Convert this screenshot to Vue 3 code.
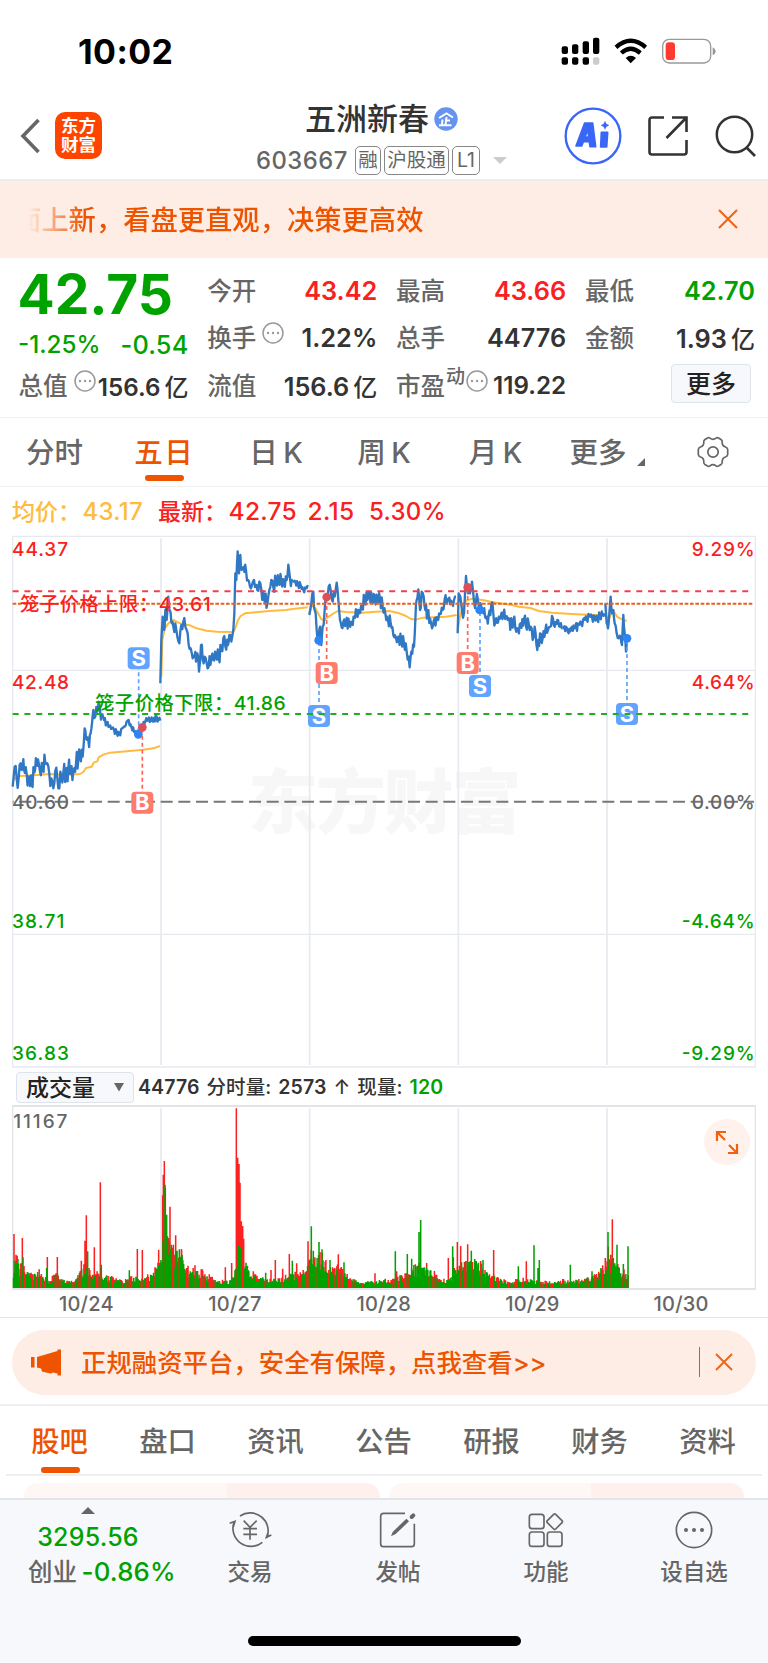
<script setup>
const quotes = [
  [{ l: '今开', v: '43.42', c: 'red' }, { l: '换手', v: '1.22%', dots: true }, { l: '流值', v: '156.6', u: '亿' }],
  [{ l: '最高', v: '43.66', c: 'red' }, { l: '总手', v: '44776' }, { l: '市盈', sup: '动', dots: true, v: '119.22', small: true }],
  [{ l: '最低', v: '42.70', c: 'green' }, { l: '金额', v: '1.93', u: '亿' }, { more: true }],
]
const infoTabs = ['股吧', '盘口', '资讯', '公告', '研报', '财务', '资料']

// Deterministic pseudo-random numbers for the intraday noise
function rng(seed) {
  let s = seed
  return () => {
    s = (s * 16807) % 2147483647
    return s / 2147483647
  }
}

// Chart units are thirds of a pixel
const price = [
  { dx: 0, amp: 32, p: '38,770 44,710 50,745 56,745 62,700 68,705 72,720 80,732 88,748 95,745 103,728 110,698 114,688 120,725 128,700 136,698 142,700 148,732 154,745 160,775 166,722 172,745 178,775 184,738 190,728 198,738 205,715 212,732 220,722 228,702 235,690 240,680 248,680 254,595 258,625 265,630 272,610 276,580 280,540 286,560 292,545 296,515 300,540 306,550' },
  { dx: 0, amp: 11, p: '306,550 312,570 320,580 328,590 336,595 342,600 350,605 358,612 366,595 374,590 380,575 386,570 394,590 402,605 410,605 420,600 428,590 436,575 444,570 452,572 460,575 470,560 475,570 481,572' },
  { dx: 0, amp: 24, p: '481,460 484,330 488,260 492,300 496,240 500,270 505,200 508,240 512,250 516,280 520,290 526,280 532,320 538,340 544,285 550,275 556,290 560,300 566,345 572,355 578,385 584,375 588,395 592,370 597,425 603,345 608,390 614,380 620,400 626,410 634,385 640,390 648,375 656,385 664,360 670,325 676,350 684,345 688,315 694,335 700,300 703,250 706,130 709,150 713,64 717,130 721,75 725,120 731,110 738,120 744,150 750,170 756,165 762,150 768,165 772,180 778,155 784,180 792,200 802,222 808,180 814,150 820,172 828,155 836,160 844,150 852,160 860,150 865,104 870,145 878,155' },
  { dx: 0, amp: 10, p: '878,155 886,155 894,165 902,165 910,180 918,175 923,165' },
  { dx: 768, amp: 22, p: '160,255 166,220 172,185 176,240 182,300 188,330 192,290 196,345 200,290 206,240 212,200 218,170 224,180 230,215 236,200 242,158 247,210 252,270 257,292 262,275 270,275 280,285 288,280 295,260 302,240 310,250 318,230 326,210 334,210 341,188 348,215 356,200 364,215 372,205 380,230 388,250 396,270 404,280 412,315 420,325 428,320 436,330 444,340 452,365 458,380 461,412 466,365 474,350 478,270 482,210 487,178 492,240 497,185 503,200 508,240 515,250 522,265 528,295 536,265 544,270 552,255' },
  { dx: 768, amp: 15, p: '552,255 560,240 566,208 574,215 580,203 588,220 594,210 600,200' },
  { dx: 768, amp: 23, p: '605,310 608,190 613,200 618,240 624,250 630,138 636,190 642,190 648,155 654,215 660,215 665,205 670,235 676,230 682,250 690,265 698,255 706,222 712,250 718,278 726,278 734,260 742,250 750,260 758,265 768,290 772,270 778,295 786,300 794,280 804,268 810,290 818,280 824,290 830,330 836,290 844,360 852,310 860,325 868,300 876,300 882,290 888,258 896,290 904,270 912,290 920,295' },
  { dx: 1536, amp: 15, p: '152,295 162,290 170,310 180,290 190,290 200,285 208,280 216,265 224,270 232,255 240,262 248,262 256,262 264,262 272,255 278,250' },
  { dx: 1536, amp: 8, p: '280,220 284,280 288,295 292,250 296,200 300,250 304,240 308,280 314,310 320,325 326,320 330,345 334,255 338,310 342,365 345,330' },
]
const avg = [
  '38,750 60,738 100,736 150,732 200,734 240,732 250,726 258,714 275,710 282,697 292,694 296,682 310,674 330,668 380,664 430,659 460,655 480,648',
  '484,440 487,330 495,295 505,280 520,270 535,278 550,283 570,286 590,295 620,302 650,305 700,306 706,295 713,272 722,258 735,250 768,247 808,243 858,240 878,237 923,232',
  '928,250 936,225 946,235 954,250 964,268 974,270 983,262 998,252 1013,243 1038,246 1088,248 1128,245 1168,243 1198,250 1218,258 1233,267 1248,269 1268,263 1298,262 1338,260 1370,255',
  '1373,300 1380,260 1388,230 1398,212 1418,206 1448,210 1478,217 1536,225 1556,230 1591,234 1616,243 1656,248 1716,252 1776,255 1814,255',
  '1817,255 1822,262 1826,268 1834,250 1842,245 1851,260 1866,268 1880,273',
]
const pts = (s) => s.split(' ').map((q) => q.split(',').map(Number))

const priceLines = price.map((seg, k) => {
  const r = rng(917 + k * 131)
  const a = pts(seg.p)
  const out = []
  let sign = 1
  for (let i = 0; i < a.length - 1; i++) {
    const [x0, y0] = a[i]
    const [x1, y1] = a[i + 1]
    const n = Math.max(1, Math.round((x1 - x0) / 2.5))
    for (let j = 0; j < n; j++) {
      const t = j / n
      const jit = j === 0 ? 0 : sign * r() * seg.amp
      if (j > 0) sign = -sign
      out.push(`${(seg.dx + x0 + (x1 - x0) * t).toFixed(1)},${(y0 + (y1 - y0) * t + jit).toFixed(1)}`)
    }
  }
  const last = a[a.length - 1]
  out.push(`${seg.dx + last[0]},${last[1]}`)
  return out.join(' ')
})

// Volume: typical height envelope, filled with noise, and single spikes on top
const env = pts('38,60 50,100 65,60 90,45 120,50 150,25 165,50 185,28 220,22 240,60 262,75 275,40 290,62 310,42 335,35 370,20 400,38 430,28 455,45 475,85 486,110 492,290 497,280 502,200 508,130 515,120 540,112 550,98 560,60 590,60 620,45 650,20 690,25 706,60 712,130 720,120 730,90 745,60 770,40 800,28 840,30 870,45 905,45 925,70 934,112 960,120 970,90 1000,70 1035,55 1050,32 1080,18 1140,25 1180,28 1200,40 1230,50 1245,80 1260,60 1275,70 1290,60 1320,30 1350,25 1365,80 1385,95 1405,80 1430,95 1450,60 1475,40 1500,30 1530,20 1560,28 1580,30 1610,22 1650,20 1690,24 1720,24 1760,35 1790,38 1810,80 1830,100 1845,80 1860,60 1886,35')
const redSpikes = pts('42,162 48,100 67,150 72,66 142,93 172,93 255,142 259,218 283,122 301,317 244,82 412,117 427,114 476,115 488,278 490,340 493,381 496,300 505,150 510,244 527,158 545,112 585,68 607,56 676,62 695,75 709,539 713,391 717,372 720,316 724,200 728,186 731,148 760,50 813,54 826,84 848,58 868,102 890,74 924,140 1015,101 1125,44 1481,114 1579,80 1190,50 1257,75 1280,75 1345,90 1372,138 1382,126 1403,131 1360,92 1928,43 1808,68 1817,82 1825,124 1832,100 1837,206 1872,56')
const greenSpikes = pts('69,92 140,60 263,110 304,70 388,53 495,310 500,220 514,130 538,116 716,128 722,122 738,76 797,46 877,82 934,185 940,112 957,138 966,116 990,84 1032,77 1186,110 1222,102 1235,88 1257,168 1262,204 1358,125 1397,80 1414,112 1449,84 1602,128 1618,84 1614,60 1555,65 1711,70 1776,50 1824,168 1851,130 1840,90 1870,72 1884,125')
const h = (x) => {
  for (let i = 1; i < env.length; i++) {
    if (x <= env[i][0]) {
      const [x0, y0] = env[i - 1]
      const [x1, y1] = env[i]
      return y0 + ((y1 - y0) * (x - x0)) / (x1 - x0)
    }
  }
  return env[env.length - 1][1]
}
const bar = (x, v) => `M${x} 684V${(684 - v).toFixed(0)}`
let redBars = ''
let greenBars = ''
const vr = rng(4242)
for (let x = 40.5; x < 1886; x += 2.2) {
  const v = h(x) * (0.5 + 0.62 * vr())
  if (vr() < 0.55) redBars += bar(x.toFixed(1), v)
  else greenBars += bar(x.toFixed(1), v * 0.88)
}
for (const [x, v] of redSpikes) if (x < 1900) redBars += bar(x, v)
for (const [x, v] of greenSpikes) greenBars += bar(x, v)

const trades = [
  { t: 'S', x: 416, y: 385, dx: 415, dy: 613 },
  { t: 'B', x: 427, y: 818, dx: 427, dy: 592 },
  { t: 'S', x: 957, y: 558, dx: 956, dy: 331 },
  { t: 'B', x: 980, y: 429, dx: 980, dy: 201 },
  { t: 'B', x: 1403, y: 399, dx: 1403, dy: 172 },
  { t: 'S', x: 1440, y: 468, dx: 1439, dy: 240 },
  { t: 'S', x: 1881, y: 552, dx: 1881, dy: 325 },
]
const axis = [
  { y: 76, l: '44.37', r: '9.29%', c: 'r', w: 168, rw: 189 },
  { y: 474, l: '42.48', r: '4.64%', c: 'r', w: 171, rw: 189 },
  { y: 834, l: '40.60', r: '0.00%', c: 'k', w: 171, rw: 189 },
  { y: 1193, l: '38.71', r: '-4.64%', c: 'g', w: 157, rw: 219 },
  { y: 1589, l: '36.83', r: '-9.29%', c: 'g', w: 171, rw: 219 },
]
</script>

<template>
  <div class="screen">
    <header class="status">
      <span class="clock">10:02</span>
      <svg class="signal" width="156" height="30" viewBox="0 0 468 90">
        <g fill="#000">
          <rect x="2" y="28" width="19" height="23" rx="6" /><rect x="33" y="22" width="19" height="29" rx="6" />
          <rect x="65" y="13" width="19" height="38" rx="6" /><rect x="96" y="2" width="19" height="49" rx="6" />
          <rect x="2" y="61" width="19" height="22" rx="6" /><rect x="33" y="61" width="19" height="22" rx="6" />
          <rect x="65" y="61" width="19" height="22" rx="6" />
        </g>
        <rect x="96" y="61" width="19" height="22" rx="6" fill="#ccc" />
        <g fill="none" stroke="#000" stroke-width="13">
          <path d="M165 31Q209 -8 254 31" /><path d="M181 48Q209 23 238 48" />
        </g>
        <path d="M194 63Q209 50 225 63L209 79Z" />
        <rect x="305" y="7" width="144" height="71" rx="20" fill="none" stroke="#999" stroke-width="4" />
        <rect x="314" y="16" width="28" height="53" rx="10" fill="#ff3b30" />
        <path d="M455 31Q464 35 464 43T455 55Z" fill="#999" />
      </svg>
    </header>

    <nav class="nav">
      <div class="left">
        <svg width="20" height="36" viewBox="0 0 20 36"><path d="M18.500 2L3 18L18.500 34" fill="none" stroke="#666" stroke-width="3.600" /></svg>
        <div class="logo"><span>东方</span><span>财富</span></div>
      </div>
      <div class="title">
        <div class="name">五洲新春
          <svg width="24" height="24" viewBox="0 0 24 24"><circle cx="12" cy="12" r="11.7" fill="#6593ee" /><path d="M5 11L12.500 6.500L19 10.500M12.500 10L11.500 18M8.500 12.500L8 18M12.500 13.500H16M5 18.300H17.500" fill="none" stroke="#fff" stroke-width="2" /></svg>
        </div>
        <div class="code"><b>603667</b><i>融</i><i class="hgt">沪股通</i><i class="l1">L1</i><em></em></div>
      </div>
      <div class="tools">
        <svg width="58" height="58" viewBox="0 0 174 174">
          <circle cx="87" cy="87" r="82" fill="none" stroke="#3a66f8" stroke-width="7" />
          <g fill="#3a66f8" stroke="#3a66f8" stroke-width="5" stroke-linejoin="round">
            <path fill-rule="evenodd" d="M36 117L62 48H86L95 119H78L76 104H58L53 117ZM63 90H74L72 67Z" />
            <path d="M112 76H131L128 120H110Z" /><path d="M123 43L127 51L135 55L127 59L123 67L119 59L111 55L119 51Z" stroke-width="1" />
          </g>
        </svg>
        <svg width="40" height="40" viewBox="0 0 40 40"><path d="M16 1.5H4Q1.5 1.5 1.5 4V36Q1.5 38.5 4 38.5H36Q38.5 38.5 38.5 36V24M24 1.5H38.5V16M38 2L18.500 22" fill="none" stroke="#333" stroke-width="2.600" /></svg>
        <svg class="mag" width="42" height="42" viewBox="0 0 42 42"><circle cx="19.500" cy="19.500" r="17.700" fill="none" stroke="#333" stroke-width="2.500" /><path d="M31 32L40 41" stroke="#333" stroke-width="2.600" /></svg>
      </div>
    </nav>

    <section class="notice">
      <p>面上新，看盘更直观，决策更高效</p>
      <svg width="20" height="20" viewBox="0 0 20 20"><path d="M1 1L19 19M19 1L1 19" stroke="#ee6414" stroke-width="2" /></svg>
    </section>

    <section class="quote">
      <div class="col main">
        <div class="last">42.75</div>
        <div class="chg"><span>-1.25%</span><span class="amt">-0.54</span></div>
        <div class="row">
          <label>总值</label>
          <svg class="more-dots" width="22" height="22" viewBox="0 0 22 22"><circle cx="11" cy="11" r="10" fill="none" stroke="#999" stroke-width="1.500" /><g fill="#999"><circle cx="6" cy="11" r="1.200" /><circle cx="11" cy="11" r="1.200" /><circle cx="16" cy="11" r="1.200" /></g></svg>
          <b class="sm">156.6<u>亿</u></b>
        </div>
      </div>
      <div v-for="(col, i) in quotes" :key="i" class="col">
        <template v-for="(q, j) in col" :key="j">
          <div v-if="q.more" class="row"><button class="more">更多</button></div>
          <div v-else class="row">
            <label>{{ q.l }}</label>
            <sup v-if="q.sup">{{ q.sup }}</sup>
            <svg v-if="q.dots" class="more-dots" :class="{ tight: q.sup }" width="22" height="22" viewBox="0 0 22 22"><circle cx="11" cy="11" r="10" fill="none" stroke="#999" stroke-width="1.500" /><g fill="#999"><circle cx="6" cy="11" r="1.200" /><circle cx="11" cy="11" r="1.200" /><circle cx="16" cy="11" r="1.200" /></g></svg>
            <b :class="[q.c, { sm: q.small }]">{{ q.v }}<u v-if="q.u">{{ q.u }}</u></b>
          </div>
        </template>
      </div>
    </section>

    <section class="ktabs">
      <span>分时</span><span class="on">五日</span><span class="k">日 K</span><span class="k">周 K</span><span class="k">月 K</span><span class="dd">更多</span>
      <span class="gear"><svg width="32" height="32" viewBox="0 0 32 32" fill="none" stroke="#666" stroke-width="1.700"><path d="M10.500 2Q12 1.300 13 2.200Q16 4.500 19 2.200Q20 1.300 21.500 2L24 3.500Q25.500 4.500 25.200 6Q25 10 28.500 11Q30.500 11.800 30.700 13.500V18.500Q30.500 20.200 28.500 21Q25 22 25.200 26Q25.500 27.500 24 28.500L21.500 30Q20 30.700 19 29.800Q16 27.500 13 29.800Q12 30.700 10.500 30L8 28.500Q6.500 27.500 6.800 26Q7 22 3.500 21Q1.500 20.200 1.300 18.500V13.500Q1.500 11.800 3.500 11Q7 10 6.800 6Q6.500 4.500 8 3.500Z" /><circle cx="16" cy="16" r="5.200" /></svg></span>
    </section>

    <section class="legend">
      <span class="y t0">均价：</span><span class="y n1">43.17</span><span class="r t0">最新：</span><span class="r n2">42.75</span><span class="r n3">2.15</span><span class="r n4">5.30%</span>
    </section>

    <svg class="chart" width="768" height="540" viewBox="0 0 2304 1620">
      <text x="744" y="894" class="wm" textLength="820">东方财富</text>
      <g fill="none" stroke="#e6e9f0" stroke-width="5">
        <path d="M38 19V1610M2266 19V1610M37 19H2267M37 1611H2267M37 421H2267M37 1213H2267" stroke-width="4" />
        <path d="M483 25V1605M929 25V1605M1375 25V1605M1821 25V1605" />
      </g>
      <path d="M38 815H2262" stroke="#777" stroke-width="6" stroke-dasharray="36 17" stroke-dashoffset="33" />
      <g fill="none" stroke="#ffbb3b" stroke-width="6" stroke-linejoin="round"><polyline v-for="a in avg" :key="a" :points="a" /></g>
      <g fill="none" stroke="#3077c4" stroke-width="7" stroke-linejoin="round"><polyline v-for="(l, i) in priceLines" :key="i" :points="l" /></g>
      <path d="M38 184H2254" stroke="#f2404a" stroke-width="6" stroke-dasharray="18 17.300" />
      <path d="M38 221H2262" stroke="#e8621c" stroke-width="6" stroke-dasharray="11 5" />
      <g v-for="(t, i) in trades" :key="i">
        <line :x1="t.x" :x2="t.x" :y1="t.y" :y2="t.dy" :stroke="t.t === 'S' ? '#5ea1fb' : '#fb6455'" stroke-width="5" stroke-dasharray="12 9" />
        <circle :cx="t.dx" :cy="t.dy" r="13" :fill="t.t === 'S' ? '#2f84f5' : '#d9505a'" />
        <rect :x="t.x - 33" :y="t.y - 33" width="66" height="66" rx="12" :fill="t.t === 'S' ? '#62a3ff' : '#ff7b6d'" />
        <text :x="t.x" :y="t.y + 23" class="mark">{{ t.t }}</text>
      </g>
      <path d="M38 552H2254" stroke="#22ac22" stroke-width="6" stroke-dasharray="18 17.300" />
      <text x="60" y="243" class="lim r" textLength="572">笼子价格上限：43.61</text>
      <text x="285" y="540" class="lim g" textLength="572">笼子价格下限：41.86</text>
      <g v-for="a in axis" :key="a.y" class="ax">
        <text x="36" :y="a.y + 2" :class="a.c" :textLength="a.w">{{ a.l }}</text>
        <text :x="2264 - a.rw" :y="a.y + 2" :class="a.c" :textLength="a.rw">{{ a.r }}</text>
      </g>
    </svg>

    <section class="volhead">
      <div class="picker">成交量<svg width="10" height="9" viewBox="0 0 10 9"><path d="M0 0H10L5 8.500Z" fill="#666" /></svg></div>
      <p><span class="num">44776</span><span>分时量:</span><span class="num">2573</span><span>↑</span><span>现量:</span><span class="green">120</span></p>
    </section>

    <div class="volume">
      <svg width="768" height="185" viewBox="0 135 2304 555">
        <g fill="none" stroke="#e2e4ea"><path d="M38 137V688M2266 137V688" stroke-width="4" /><path d="M483 145V686M929 145V686M1375 145V686M1821 145V686" stroke="#e6e9f0" stroke-width="5" /><path d="M37 138H2268M37 687H2268" stroke-width="6" /></g>
        <path :d="redBars" stroke="#fc2020" stroke-width="4.600" />
        <path :d="greenBars" stroke="#00a200" stroke-width="4.600" />
        <text x="40" y="203" class="vmax" textLength="162">11167</text>
      </svg>
      <button class="expand"><svg width="24" height="24" viewBox="0 0 24 24" fill="none" stroke="#f0610f" stroke-width="2.200"><path d="M2 11V2H11M2 2L10 10M22 14V23H13M22 23L14 15" /></svg></button>
    </div>
    <div class="dates"><span>10/24</span><span>10/27</span><span>10/28</span><span>10/29</span><span>10/30</span></div>

    <section class="promo">
      <div class="pill">
        <svg width="31" height="27" viewBox="0 0 31 27" fill="#ee5400"><path d="M0 8H3.500V18.500H0ZM6 8L26.500 2V0.500H30V26.500H26.500V24.500L22 23.500Q20 25 17 24L11 22.500L10 19.500L6 18.500Z" /></svg>
        <p>正规融资平台，安全有保障，点我查看&gt;&gt;</p>
        <i></i>
        <svg class="x" width="18" height="18" viewBox="0 0 18 18"><path d="M1 1L17 17M17 1L1 17" stroke="#ee6414" stroke-width="1.900" /></svg>
      </div>
    </section>

    <section class="itabs"><span v-for="(t, i) in infoTabs" :key="t" :class="{ on: i === 0 }">{{ t }}</span></section>
    <section class="cards"><div></div><div></div></section>

    <footer class="bar">
      <div class="index">
        <em></em>
        <b>3295.56</b>
        <p>创业<b>-0.86%</b></p>
      </div>
      <div class="act">
        <svg width="44" height="40" viewBox="0 0 132 120" fill="none" stroke="#666" stroke-width="5"><path d="M36 21A54 54 0 0 1 116 87M103 100A54 54 0 0 1 18 40M5 43L21 37L16 53M130 78L115 85L121 68" /><path d="M47 35L66 55L86 35M66 55V92M46 59H87M46 76H87" /></svg>
        <span>交易</span>
      </div>
      <div class="act">
        <svg width="38" height="40" viewBox="0 0 114 120" fill="none" stroke="#666" stroke-width="5"><path d="M78 13H14Q5 13 5 22V104Q5 113 14 113H97Q106 113 106 104V44" /><path d="M98 24L103 19" stroke-width="12" stroke-linecap="round" /><path d="M36 82L41 69L82 29L90 37L50 75Z" fill="#666" stroke="none" /></svg>
        <span>发帖</span>
      </div>
      <div class="act">
        <svg width="36" height="40" viewBox="0 0 108 120" fill="none" stroke="#666" stroke-width="5"><rect x="4" y="16" width="44" height="43" rx="8" /><rect x="4" y="69" width="44" height="43" rx="8" /><rect x="58" y="69" width="44" height="43" rx="8" /><path d="M77 16Q80 13 83 16L102 35Q105 38 102 41L83 60Q80 63 77 60L58 41Q55 38 58 35Z" /></svg>
        <span>功能</span>
      </div>
      <div class="act">
        <svg width="38" height="40" viewBox="0 0 114 120"><circle cx="57" cy="63" r="53" fill="none" stroke="#666" stroke-width="5" /><g fill="#666"><circle cx="33" cy="63" r="6" /><circle cx="57" cy="63" r="6" /><circle cx="81" cy="63" r="6" /></g></svg>
        <span>设自选</span>
      </div>
      <div class="home"></div>
    </footer>
  </div>
</template>

<style>
body { margin: 0; background: #fff; }
</style>

<style scoped>
.screen { width: 768px; height: 1663px; overflow: hidden; display: flex; flex-direction: column; background: #fff; color: #333; font-family: Inter, "Noto Sans CJK SC", sans-serif; font-weight: 500; }
.screen > * { flex: none; box-sizing: border-box; }
p { margin: 0; }
svg { display: block; flex: none; }
b { font-weight: 600; }
i, em { font-style: normal; }
u { text-decoration: none; }
.red { color: #fa2020; }
.green { color: #00a200; }

.status { height: 92px; display: flex; align-items: flex-start; justify-content: space-between; padding: 32px 51px 0 78px; }
.clock { font-size: 34px; line-height: 40px; font-weight: 700; color: #000; letter-spacing: .4px; }
.signal { margin-top: 5px; }

.nav { height: 89px; border-bottom: 2px solid #e9ecf0; display: grid; grid-template-columns: 256px 260px 1fr; }
.left { display: flex; align-items: center; padding-left: 20px; }
.logo { margin-left: 15px; width: 47px; height: 47px; border-radius: 10px; background: #ff4400; color: #fff; font-size: 17.5px; line-height: 19px; font-weight: 700; display: flex; flex-direction: column; align-items: center; justify-content: center; }
.logo span { position: relative; top: -1px; }
.title { padding-top: 3px; }
.name { display: flex; align-items: center; gap: 5px; padding-left: 49px; height: 42px; font-size: 31px; }
.name svg { margin-top: 6px; }
.code { display: flex; align-items: center; height: 29px; margin-top: 9px; color: #666; }
.code b { font-size: 23.8px; font-weight: 500; letter-spacing: .5px; width: 99px; }
.code i { box-sizing: border-box; height: 29px; border: 1.5px solid #888; border-radius: 5px; font-size: 19.5px; line-height: 27px; width: 26px; text-align: center; font-weight: 400; margin-right: 3px; }
.code .hgt { width: 65px; }
.code .l1 { width: 28px; }
.code em { border: 7px solid transparent; border-top-color: #ccc; border-bottom: 0; margin-left: 10px; }
.tools { display: flex; align-items: center; padding-left: 48px; }
.tools svg + svg { margin-left: 26px; }
.tools .mag { margin-left: 27px; }

.notice { height: 77px; background: #feede5; display: flex; align-items: center; justify-content: space-between; padding: 0 30px 0 14px; color: #ee5400; font-size: 27.3px; }
.notice p { margin-top: -4px; -webkit-mask-image: linear-gradient(90deg, transparent 14px, #000 70px); mask-image: linear-gradient(90deg, transparent 14px, #000 70px); }
.notice svg { margin-top: -1px; }

.quote { height: 160px; border-bottom: 1px solid #f0f1f3; padding: 9px 13px 0 19px; display: grid; grid-template-columns: repeat(4, 169.500px); column-gap: 19.300px; }
.row { display: flex; align-items: center; height: 47.500px; position: relative; }
.row label { font-size: 24.500px; color: #666; margin: -3px 0 0 -.5px; }
.row b { margin: -1px 0 0 auto; font-size: 25.300px; white-space: nowrap; }
.row b.sm { font-size: 24.200px; padding-top: 1px; }
.row u { font-size: 24px; font-weight: 500; margin-left: 4px; }
.more-dots { margin: -10px 0 0 6px; }
.more-dots.tight { margin-left: 1px; }
sup { font-size: 19px; line-height: 20px; color: #666; margin: -18px 0 0 1px; vertical-align: baseline; }
.last { font-size: 55px; line-height: 54px; height: 54px; font-weight: 700; color: #00a200; margin-left: -1.500px; }
.chg { height: 41px; display: flex; justify-content: space-between; font-size: 24.200px; line-height: 47px; font-weight: 500; color: #00a200; margin-left: -1px; }
.chg .amt { font-size: 25.300px; letter-spacing: .2px; }
.more { margin: -4px 4px 0 auto; width: 80px; height: 39px; border: 1.500px solid #dfe3ea; border-radius: 4px; background: #f7f8fb; padding: 0; font: inherit; font-size: 25px; line-height: 34px; color: #222; }

.ktabs { height: 69px; border-bottom: 1px solid #f0f1f3; display: grid; grid-template-columns: 109px 109px 116px 100px 123px 82px 1fr; color: #666; font-size: 28.500px; line-height: 69px; text-align: center; }
.ktabs span { position: relative; }
.on { color: #ee5400; }
.ktabs .on { letter-spacing: 1.500px; padding-left: 1.500px; }
.ktabs .k { word-spacing: -2px; }
.ktabs .on::after, .itabs .on::after { content: ""; position: absolute; left: 50%; bottom: 6px; width: 39px; height: 6px; margin-left: -19px; border-radius: 3px; background: #ee5400; }
.dd::after { content: ""; position: absolute; left: 80px; top: 40px; border-left: 8px solid transparent; border-bottom: 8px solid #666; }
.gear { padding: 18px 0 0 58px; }

.legend { height: 43px; padding: 5px 0 0 12px; display: flex; align-items: center; font-size: 23px; }
.legend span { white-space: nowrap; }
.legend .y { color: #ffbb3b; }
.legend .r { color: #fa2020; }
.legend .t0 { width: 70.500px; margin-top: -2px; }
.n1, .n2, .n3, .n4 { font-size: 24px; letter-spacing: .3px; }
.n1 { width: 75.500px; }
.n2 { width: 79px; font-weight: 500; font-size: 24.500px; }
.n3 { width: 61.500px; font-weight: 500; font-size: 24.500px; }
.n4 { font-weight: 500; }

.chart text { font-family: Inter, "Noto Sans CJK SC", sans-serif; }
.chart .wm { font-size: 210px; font-weight: 800; fill: #f7f7f7; }
.chart .mark { font-size: 66px; font-weight: 700; fill: #fff; text-anchor: middle; }
.chart .lim { font-size: 58px; font-weight: 500; }
.ax text { font-size: 57px; font-weight: 500; }
.chart .r { fill: #fa2020; }
.chart .g { fill: #00a200; }
.chart .k { fill: #666; }

.volhead { height: 35px; display: flex; align-items: flex-start; padding: 1px 0 0 16px; }
.picker { box-sizing: border-box; width: 118px; height: 31px; margin-top: 1px; border: 1.500px solid #dfe3ea; border-radius: 4px; background: #f7f8fb; display: flex; align-items: center; justify-content: space-between; padding: 0 9px; font-size: 23px; line-height: 28px; color: #222; }
.volhead p { display: flex; gap: 7px; padding-left: 4px; font-size: 19.500px; line-height: 33px; font-weight: 500; letter-spacing: .1px; white-space: nowrap; }
.volhead .num, .volhead .green { font-weight: 600; }
.volume { height: 185px; position: relative; }
.vmax { font-family: Inter, sans-serif; font-size: 57px; font-weight: 500; fill: #666; }
.expand { position: absolute; left: 704px; top: 14px; width: 46px; height: 46px; padding: 0 0 0 11px; border: 0; border-radius: 50%; background: #fff1eb; }
.dates { height: 28px; border-bottom: 1px solid #e3e5ea; padding: 0 12px; display: grid; grid-template-columns: repeat(5, 148.700px); text-align: center; font-size: 20px; line-height: 29px; letter-spacing: .2px; color: #666; }

.promo { height: 88px; border-bottom: 2px solid #efefef; padding: 12px 12px 0; }
.pill { height: 65px; border-radius: 33px; background: #feede5; color: #ee5400; display: flex; align-items: center; padding-left: 19px; }
.pill p { font-size: 25.400px; flex: none; width: 637px; padding: 0 0 4px 19px; box-sizing: border-box; }
.pill i { width: 1px; height: 30px; background: #ee5400; margin: -2px 15px 0 0; }
.pill .x { margin-top: -2px; }
.itabs { height: 70px; margin: 0 6px; border-bottom: 2px solid #efefef; display: grid; grid-template-columns: repeat(7, 108px); text-align: center; font-size: 28.300px; line-height: 72px; color: #666; }
.itabs span { position: relative; left: -.5px; }
.itabs .on::after { bottom: 5px; }
.cards { height: 22px; padding: 7px 24px 0; display: flex; gap: 9px; }
.cards div { flex: 1; border-radius: 14px 14px 0 0; background: linear-gradient(90deg, #fff7f5 57%, #fff0ed 57%); }

.bar { height: 165px; border-top: 2px solid #e3e6e9; background: #f7f8fb; position: relative; display: grid; grid-template-columns: 176px repeat(4, 148px); }
.index { display: flex; flex-direction: column; align-items: center; padding: 7px 0 0 0; }
.index em { border: 7px solid transparent; border-bottom-color: #666; border-top: 0; }
.index b { color: #00a200; font-size: 25px; line-height: 32px; font-weight: 500; margin-top: 7px; letter-spacing: .2px; }
.index p { font-size: 24.500px; line-height: 36px; color: #666; white-space: nowrap; align-self: flex-start; padding: 1px 0 0 28px; }
.index p b { margin-left: 4.500px; font-size: 25.800px; }
.act { display: flex; flex-direction: column; align-items: center; padding-top: 9px; font-size: 22.500px; line-height: 34px; color: #666; }
.act span { margin-top: 6px; }
.home { position: absolute; left: 248px; top: 136px; width: 273px; height: 10px; border-radius: 5px; background: #000; }
</style>
